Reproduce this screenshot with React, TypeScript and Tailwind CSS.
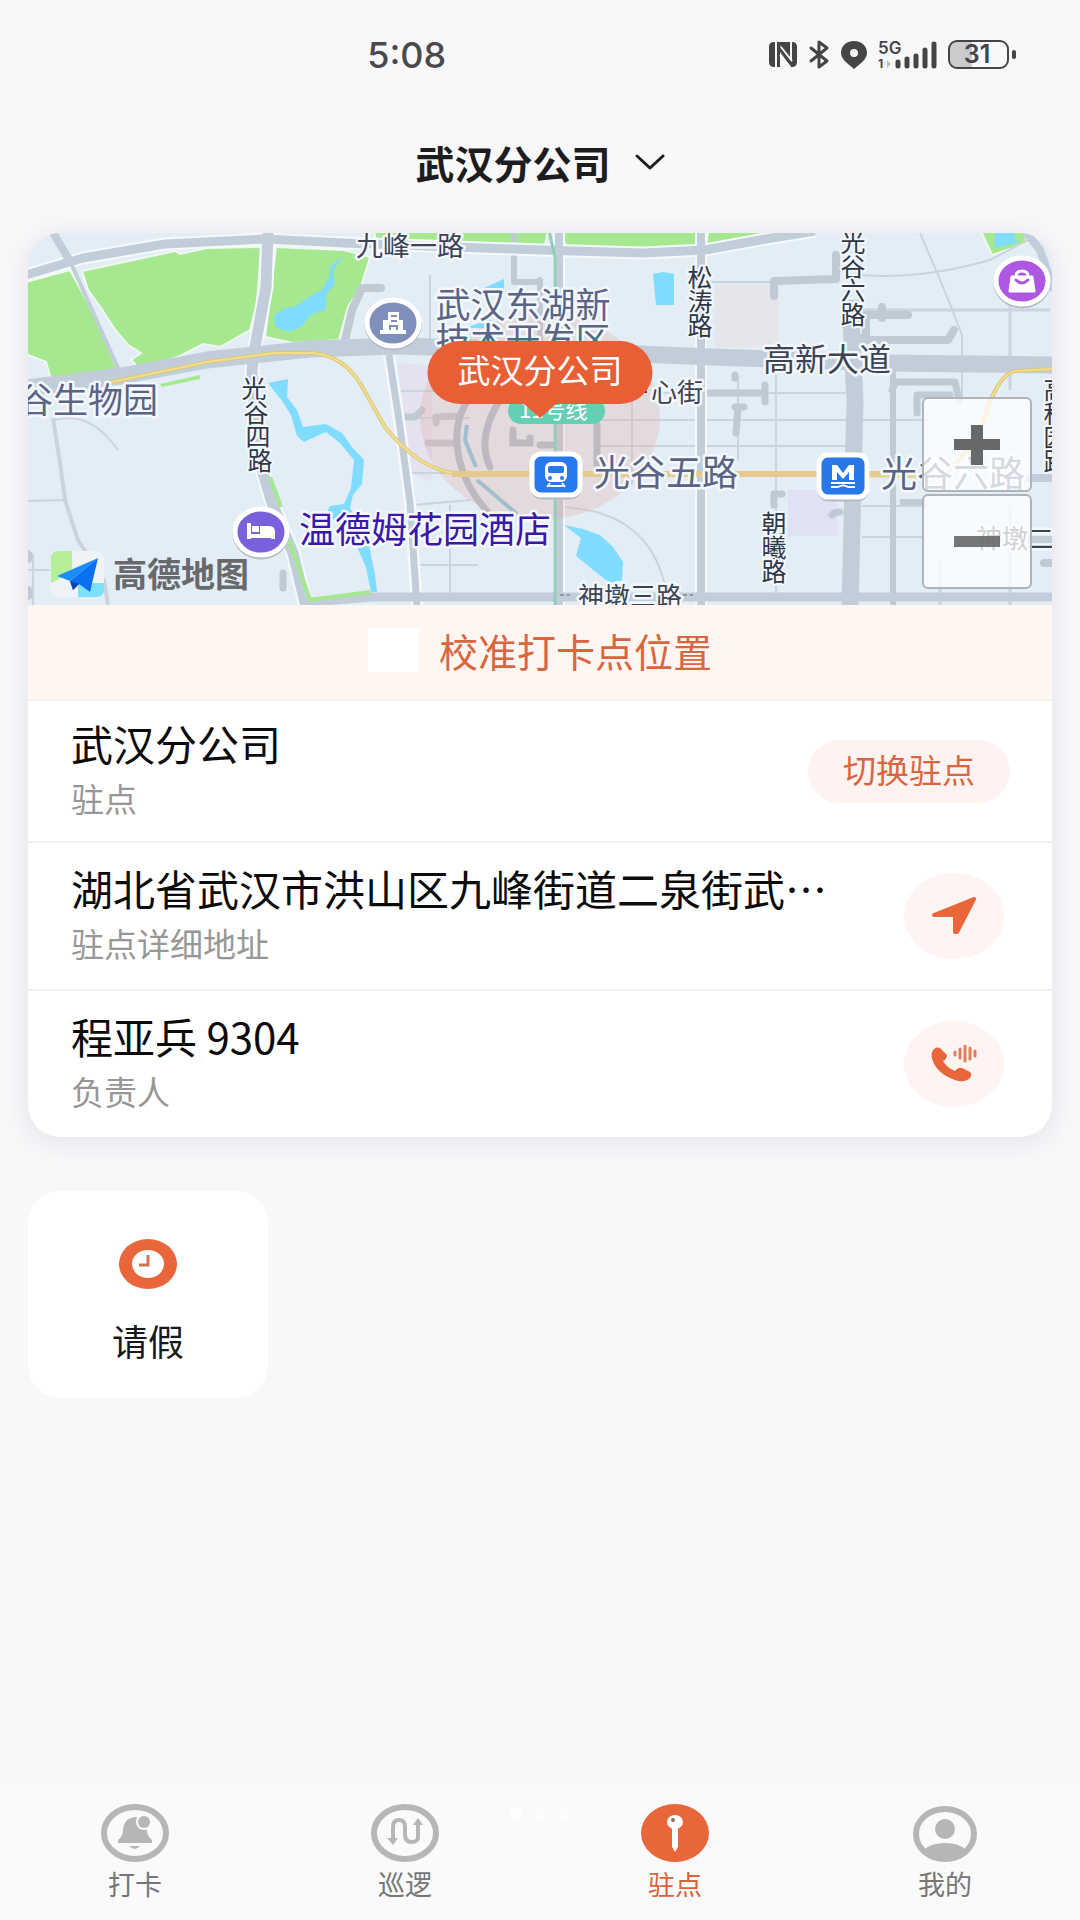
import React, { useState } from 'react';

interface RowProps {
  title: string;
  label: string;
  className: string;
  children: React.ReactNode;
}

const PlaceLabel = ({ x, y, size = 26, fill = '#3c4456', anchor = 'start', text }: {
  x: number; y: number; size?: number; fill?: string; anchor?: 'start' | 'middle' | 'end'; text: string;
}) => (
  <text x={x} y={y} fontSize={size} fill={fill} textAnchor={anchor} stroke="#f4f8fc" strokeWidth={5} strokeLinejoin="round" paintOrder="stroke">{text}</text>
);

// Street names that run down the road, one character per line
const StreetLabel = ({ chars, x, y, step = 24, drift = 0 }: { chars: string; x: number; y: number; step?: number; drift?: number }) => (
  <g fontSize={25} fill="#2f3747" textAnchor="middle" stroke="#f4f8fc" strokeWidth={4} strokeLinejoin="round" paintOrder="stroke">
    {chars.split('').map((c, i) => (
      <text key={i} x={x + i * drift} y={y + i * step}>{c}</text>
    ))}
  </g>
);

const CityMap = () => (
  <svg viewBox="28 233 1024 372" className="block w-full" role="img" aria-label="地图">
    <rect x="28" y="233" width="1024" height="372" fill="#e2edf6" />

    {/* districts */}
    <path d="M715 285h64v60l-64 3z" fill="#e5e5ea" />
    <path d="M788 490h50v46h-50z" fill="#e0e2f4" />
    <path d="M392 362l40 4v115l-28-10z" fill="#e4e2f1" />

    {/* parks */}
    <g fill="#a5e88f" stroke="#f0f8f2" strokeWidth="2">
      <path d="M26 282L70 270L92 310L119 373L52 383L46 362L26 354z" />
      <path d="M82 271L152 256L175 251L180 254L207 248L261 247L257 303L250 330L236 338L220 347L203 344L180 356L165 361L138 367L131 360L141 353L128 345L116 331L101 308L88 290z" />
      <path d="M276 247L344 250L370 257L361 287L348 307L339 340L293 343L265 337L271 290z" />
      <path d="M374 231H548L545 245L460 244L376 241z" />
      <path d="M561 231H700V246L640 250L566 247z" />
      <path d="M708 231H790L706 248z" />
      <path d="M981 231H1023L1028 243L992 255z" />
    </g>
    <path d="M160 384l40-9v4l-38 8z" fill="#a5e88f" />

    {/* water */}
    <g fill="#7fdcff">
      <path d="M344 255L333 270L335 284L327 293L325 310L312 314L301 327L288 332L275 327L274 316L283 309L296 306L312 295L322 290L329 277L330 267z" />
      <path d="M268 383L288 379L287 397L297 410L303 427L326 424L342 433L352 447L364 460L362 484L353 495L350 508L356 519L369 545L375 575L377 592L371 592L366 567L356 545L338 525L327 512L330 506L344 504L351 488L354 460L340 443L326 432L304 442L297 436L291 415L282 401z" />
      <path d="M653 274l10-2 11 2v31h-18z" />
      <path d="M564 525L583 529L600 535L613 547L623 562L622 580L611 584L597 573L576 556L581 538z" />
      <path d="M484 288l20-9v13z" />
      <path d="M995 233h18l5 10-24 5z" />
      <path d="M465 328l26-9 4 9z" />
    </g>
    <path d="M467 425l-2 15 11 27M477 480l40 34" fill="none" stroke="#85c6dd" strokeWidth="4" />

    {/* minor streets */}
    <g fill="none" stroke="#cbd4de" strokeWidth="2">
      <path d="M53 418L61 470L65 500L78 540L104 580L108 605" strokeWidth="4" />
      <path d="M28 501L65 500M28 570H50M55 420Q90 410 118 450" />
      <path d="M394 391H450M400 418H470M410 473H460M413 505L470 500M420 565H478M450 505V595" />
      <path d="M560 507Q650 510 666 590M660 393H850M600 420H850M600 446H850" />
      <path d="M700 282H775M776 375V600M738 375V460M632 395V485M598 400V470" />
      <path d="M860 420H930M862 506H930M862 537H925M860 275Q920 280 990 260L1028 240M920 233Q945 290 962 335V400" />
      <path d="M862 310H1050M1010 260V390M1010 505V605M940 560V605" strokeWidth="3" />
      <path d="M430 275V345M28 550L33 555V605" />
    </g>

    {/* side roads */}
    <g fill="none" stroke="#bfcad5" strokeWidth="8" strokeLinecap="round" strokeLinejoin="round">
      <path d="M344 345L352 310L362 288H381" />
      <path d="M402 417H415L422 410M436 423V417L458 416M428 443H455" strokeWidth="7" />
      <path d="M774 296V281L836 279V255" />
      <path d="M735 375V378M705 393H760M765 385V402M735 407H744M738 407L736 433" strokeWidth="7" />
      <path d="M860 338L868 340H948L954 330M866 335V315H908M882 307V318" />
      <path d="M892 390L896 382H955L959 400M917 413V395H950" strokeWidth="7" />
      <path d="M774 505V494H782M832 515Q834 512 840 512M283 573v15" strokeWidth="7" />
      <path d="M893 370V605M900 502H925" strokeWidth="6" strokeLinecap="butt" />
      <path d="M514 231V282H540M540 280V345" strokeWidth="6" />
      <path d="M1044 563h8M28 555v4M28 590v6" />
    </g>

    {/* main roads */}
    <g fill="none" stroke="#f5f9fc" strokeLinejoin="round">
      <path d="M26 275L83 258L165 244L265 239L344 243L540 250L643 253L705 250L760 240L815 231" strokeWidth="13" />
      <path d="M268 231L266 287L255 347L252 370L257 453L272 503L293 553L306 607" strokeWidth="15" />
      <path d="M389 355L399 420L410 503L417 607M701 231V605M852 300V607M559 231V605" strokeWidth="12" />
    </g>
    <g fill="none" stroke="#c1ced9" strokeLinejoin="round">
      <path d="M26 275L83 258L165 244L265 239L344 243L540 250L643 253L705 250L760 240L815 231" strokeWidth="9" />
      <path d="M52 231L71 263" strokeWidth="8" />
      <path d="M71 263L122 377" strokeWidth="4" />
      <path d="M268 231L266 287L255 347L252 370L257 453L272 503L293 553L306 607" strokeWidth="11" />
      <path d="M389 355L399 420L410 503L417 607" strokeWidth="7" />
      <path d="M300 603L372 597H1054" strokeWidth="9" />
      <path d="M559 231V605M701 231V605" strokeWidth="8" />
      <path d="M850 300L855 400L850 607" strokeWidth="17" />
      <path d="M1025 231L1040 250L1054 290M1014 478h40M1026 540h28" strokeWidth="8" />
      <path d="M26 388L121 376L207 360L310 349L396 346L540 350L712 357L884 363L1054 365" strokeWidth="17" />
    </g>
    <path d="M270 477L281 507M289 540L310 600L370 592" fill="none" stroke="#a5e88f" strokeWidth="4" />

    {/* service area around the station */}
    <ellipse cx="540" cy="417" rx="120" ry="103" fill="#e5a9a2" opacity=".28" />
    <g fill="none" stroke="#beb9c0" strokeWidth="7" strokeLinecap="round">
      <path d="M466 403C450 430 454 475 488 512M498 403C482 430 482 450 490 467M513 430V443H530V438M597 425V465M540 445H552" />
    </g>

    {/* metro lines */}
    <path d="M107 383L207 362L275 353H312Q342 355 360 383L385 427Q420 470 455 473H700L940 476Q965 462 984 420Q997 375 1015 371L1054 369" fill="none" stroke="#d9c87e" strokeWidth="4" />
    <path d="M107 383L207 362L275 353H312Q342 355 360 383L385 427Q420 470 455 473H700L940 476Q965 462 984 420Q997 375 1015 371L1054 369" fill="none" stroke="#f3dc8c" strokeWidth="2" />
    <path d="M452 474H880" fill="none" stroke="#e5c98d" strokeWidth="6" />
    <path d="M549 231L555 257V605" fill="none" stroke="#8fceb9" strokeWidth="3" />

    <PlaceLabel x={356} y={256} size={27} text="九峰一路" />
    <PlaceLabel x={523} y={318} size={35} fill="#5a6484" anchor="middle" text="武汉东湖新" />
    <PlaceLabel x={523} y={353} size={35} fill="#5a6484" anchor="middle" text="技术开发区" />
    <PlaceLabel x={158} y={413} size={35} fill="#5a6484" anchor="end" text="光谷生物园" />
    <PlaceLabel x={891} y={371} size={32} anchor="end" text="高新大道" />
    <PlaceLabel x={703} y={402} size={26} anchor="end" text="心街" />
    <path d="M640 392h7" stroke="#3c4456" strokeWidth="2" />
    <PlaceLabel x={594} y={486} size={36} fill="#5a6484" text="光谷五路" />
    <PlaceLabel x={881} y={487} size={36} fill="#5a6484" text="光谷六路" />
    <PlaceLabel x={299} y={543} size={36} fill="#3a19a8" text="温德姆花园酒店" />
    <path d="M560 595h10M683 595h10" stroke="#8d97a4" strokeWidth="2" strokeDasharray="4 3" />
    <PlaceLabel x={578} y={606} size={26} text="神墩三路" />
    <PlaceLabel x={976} y={548} size={26} text="神墩二路" />
    <StreetLabel chars="光谷四路" x={254} y={398} drift={2} />
    <StreetLabel chars="松涛路" x={700} y={287} />
    <StreetLabel chars="光谷六路" x={853} y={252} />
    <StreetLabel chars="朝曦路" x={774} y={533} />
    <StreetLabel chars="高科园路" x={1056} y={399} />

    {/* points of interest */}
    <g stroke="#fff" strokeWidth="5">
      <ellipse cx="393" cy="325" rx="28" ry="25" fill="#a9b3c4" stroke="#b5bfca" strokeWidth="1" />
      <ellipse cx="393" cy="323" rx="26" ry="23" fill="#7f8ebb" />
      <ellipse cx="261" cy="534" rx="28" ry="25" fill="#a9b3c4" stroke="#b5bfca" strokeWidth="1" />
      <ellipse cx="261" cy="532" rx="26" ry="23" fill="#7a60dc" />
      <ellipse cx="1022" cy="283" rx="28" ry="25" fill="#a9b3c4" stroke="#b5bfca" strokeWidth="1" />
      <ellipse cx="1022" cy="281" rx="26" ry="23" fill="#ad57e2" />
      <rect x="531" y="455" width="50" height="44" rx="10" fill="#a9b3c4" stroke="#b5bfca" strokeWidth="1" />
      <rect x="532" y="454" width="48" height="41" rx="9" fill="#2878f0" />
      <rect x="818" y="456" width="50" height="45" rx="10" fill="#a9b3c4" stroke="#b5bfca" strokeWidth="1" />
      <rect x="819" y="455" width="48" height="42" rx="9" fill="#2878e8" />
    </g>
    <g fill="#fff">
      <path d="M388 312h11v8h4v10h3v4h-26v-4h3v-10h5z" />
      <path d="M391 316h6M391 321h6M390 330v-4h7v4" fill="none" stroke="#7f8ebb" strokeWidth="2" />
      <path d="M247 523h4v11h16v-8h2q6 0 6 6v7h-4v-1h-20v1h-4z" />
      <path d="M252 526h7v6h-7zM260 526h8v8h-8z" />
      <path d="M1012 277h20l2 14h-24z" stroke="#fff" strokeWidth="3" strokeLinejoin="round" />
      <path d="M1016 277v-1q0-5 6-5t6 5v1" fill="none" stroke="#fff" strokeWidth="3" />
      <path d="M1016 280q6 6 12 0" fill="none" stroke="#ad57e2" strokeWidth="3" strokeLinecap="round" />
      <rect x="545" y="462" width="22" height="20" rx="6" />
      <path d="M547 487l3-4M565 487l-3-4M549 486h14" stroke="#fff" strokeWidth="2" />
      <rect x="548" y="466" width="16" height="7" rx="2" fill="#2878f0" />
      <circle cx="550" cy="478" r="2" fill="#2878f0" />
      <circle cx="562" cy="478" r="2" fill="#2878f0" />
      <path d="M832 480V465h5l6 8 6-8h5v15h-5v-8l-6 7-6-7v8z" />
      <path d="M831 483h24M831 487h7q5-3 10 0h7" fill="none" stroke="#fff" strokeWidth="2" />
    </g>

    <rect x="508" y="398" width="97" height="26" rx="13" fill="#63cfb4" />
    <text x="519" y="418" fontSize="22" fill="#fff">11号线</text>
    <path d="M460 341H620A32 31 0 0 1 620 404H556L540 418L524 404H460A32 31 0 0 1 460 341z" fill="#e95f35" />
    <text x="540" y="383" fontSize="33" fill="#fff" textAnchor="middle">武汉分公司</text>

    {/* map provider */}
    <rect x="51" y="551" width="53" height="46" rx="8" fill="#eef4f6" />
    <path d="M59 551h13v22l-21 10v-24q0-8 8-8z" fill="#b5ef9a" />
    <path d="M78 597v-14h26v6q0 8-8 8z" fill="#7de0fb" />
    <path d="M98 558L57 576l13 5z" fill="#1b8dfa" />
    <path d="M98 558L70 581l3 9 6-6 11 8z" fill="#0a6ff0" />
    <path d="M70 581l3 9 6-6z" fill="#1443a8" />
    <text x="113" y="587" fontSize="34" fontWeight="700" fill="#67696d">高德地图</text>
  </svg>
);

const StatusIcons = () => (
  <svg viewBox="768 38 250 34" className="h-[34px] w-[250px] text-[#454547]" fill="currentColor" aria-hidden="true">
    <path d="M774 42h1v25h-1q-5 0-5-5V47q0-5 5-5z" />
    <path d="M777 42l15 20v-20q5 0 5 5v15q0 5-5 5h-1l-11-15v15h-3z" />
    <path d="M777 42h13v17l-10-14v22h-3z" />
    <path d="M781 47l11 14M780 55l10 12M791 42v18" stroke="#f8f8fb" strokeWidth="2" fill="none" />
    <path d="M811 48l16 13-8 6V42l8 6-16 13" fill="none" stroke="currentColor" strokeWidth="3" strokeLinejoin="round" strokeLinecap="round" />
    <path fillRule="evenodd" d="M854 41c8 0 13 5 13 12 0 6-7 11-13 16-6-5-13-10-13-16 0-7 5-12 13-12zm0 8a4 4 0 1 0 0 8 4 4 0 0 0 0-8z" />
    <text x="878" y="54" fontSize="17" fontWeight="600" fontFamily="Inter, sans-serif">5G</text>
    <text x="878" y="68" fontSize="12" fontWeight="700" fontFamily="Inter, sans-serif">1</text>
    <path d="M887 60l4 4-4 4z" opacity=".3" />
    <g stroke="currentColor" strokeWidth="5" strokeLinecap="round">
      <path d="M898 62v4M907 59v7M916 56v10M925 50v16M934 44v22" />
    </g>
    <path d="M957 42h15v25h-15q-7 0-7-7V49q0-7 7-7z" opacity=".25" />
    <rect x="949" y="41" width="59" height="27" rx="8" fill="none" stroke="currentColor" strokeWidth="2" />
    <rect x="1012" y="50" width="4" height="9" rx="2" />
    <text x="977" y="63" fontSize="25" fontWeight="600" textAnchor="middle" fontFamily="Inter, sans-serif">31</text>
  </svg>
);

const InfoRow: React.FC<RowProps> = ({ title, label, className, children }) => (
  <div className={`flex items-center justify-between border-t-2 border-[#f2f1f3] pl-[43px] ${className}`}>
    <div className="min-w-0">
      <h2 className="truncate pb-1 text-[42px] leading-[50px] text-[#0b0b0c]">{title}</h2>
      <p className="text-[33px] leading-[52px] text-[#979797]">{label}</p>
    </div>
    {children}
  </div>
);

const ring = <ellipse cx="34" cy="29" rx="31" ry="26" fill="none" stroke="#b6b6b6" strokeWidth="6" />;

const tabs = [
  {
    name: '打卡',
    icon: (
      <>
        {ring}
        <path d="M17 36q5-4 5-10 1-12 12-13 11 1 12 13 0 6 5 10v3H17z" fill="#b6b6b6" />
        <circle cx="43" cy="18" r="8" fill="#fafafa" />
        <circle cx="43" cy="18" r="6" fill="#b6b6b6" />
        <path d="M28 42h11q-5 6-11 0z" fill="#b6b6b6" />
      </>
    ),
  },
  {
    name: '巡逻',
    icon: (
      <>
        {ring}
        <path d="M22 36V23q0-7 6-7t6 7v8q0 7 7 7t6-7V20" fill="none" stroke="#b6b6b6" strokeWidth="4" />
        <path d="M16 34h11l-5 7zM42 21h10l-5-7z" fill="#b6b6b6" />
      </>
    ),
  },
  {
    name: '驻点',
    icon: (
      <>
        <ellipse cx="34" cy="29" rx="34" ry="29" fill="#e9653a" />
        <ellipse cx="34" cy="18" rx="8" ry="7" fill="#fff" />
        <path d="M31 23h6v20l-3 5-3-5z" fill="#fff" />
        <circle cx="32" cy="16" r="2" fill="#9a6a58" />
      </>
    ),
  },
  {
    name: '我的',
    icon: (
      <>
        <ellipse cx="34" cy="30" rx="29" ry="25" fill="none" stroke="#b6b6b6" strokeWidth="6" />
        <ellipse cx="34" cy="25" rx="10" ry="10" fill="#b6b6b6" />
        <path d="M13 46Q20 39 34 39t21 7q-8 11-21 11T13 46z" fill="#b6b6b6" />
      </>
    ),
  },
];

export default function App() {
  const [activeTab, setActiveTab] = useState('驻点');

  return (
    <div className="flex min-h-screen flex-col bg-[#f8f8fb] font-['Noto_Sans_CJK_SC',sans-serif]">
      <div className="flex h-[110px] items-center justify-between pl-[34%] pr-[62px]">
        <span className="font-[Inter,sans-serif] text-4xl font-medium text-[#4a4a4c]">5:08</span>
        <StatusIcons />
      </div>

      <header className="flex h-[104px] items-center justify-center">
        <button className="flex items-center gap-6 text-[39px] font-bold text-[#1d1d1f]">
          武汉分公司
          <svg viewBox="0 0 30 16" className="h-4 w-[30px]" fill="none" stroke="currentColor" strokeWidth="3" strokeLinecap="round" strokeLinejoin="round" aria-hidden="true">
            <path d="M2 2l13 12L28 2" />
          </svg>
        </button>
      </header>

      <main className="px-7 pt-[19px]">
        <section className="overflow-hidden rounded-[32px] bg-white shadow-[0_4px_28px_rgba(40,40,60,0.10)]">
          <div className="relative">
            <CityMap />
            <div className="absolute bottom-4 right-5 flex w-[110px] flex-col gap-[2px]">
              <button aria-label="放大" className="flex h-[95px] items-center justify-center rounded-md border-2 border-[#aeb4ba] bg-white/75">
                <svg viewBox="0 0 46 40" className="h-10 w-[46px]" fill="#666869"><path d="M17 0h12v14h17v11H29v15H17V25H0V14h17z" /></svg>
              </button>
              <button aria-label="缩小" className="flex h-[95px] items-center justify-center rounded-md border-2 border-[#aeb4ba] bg-white/75">
                <svg viewBox="0 0 46 40" className="h-10 w-[46px]" fill="#666869" opacity=".9"><path d="M0 14h46v11H0z" /></svg>
              </button>
            </div>
          </div>

          <button className="flex h-[94px] w-full items-center justify-center gap-5 bg-[#fff5f1] pb-1 text-[39px] text-[#d9663f]">
            <span className="h-11 w-[51px] bg-white" />
            校准打卡点位置
          </button>

          <InfoRow title="武汉分公司" label="驻点" className="py-[17px] pr-[42px]">
            <button className="h-[63px] shrink-0 rounded-full bg-[#fff3f1] px-[35px] pb-1 text-[33px] leading-[58px] text-[#d9663f]">切换驻点</button>
          </InfoRow>
          <InfoRow title="湖北省武汉市洪山区九峰街道二泉街武…" label="驻点详细地址" className="py-5 pr-12">
            <button aria-label="导航" className="flex h-[86px] w-[100px] shrink-0 items-center justify-center rounded-[50%] bg-[#fff4f2]">
              <svg viewBox="0 0 44 38" className="h-[38px] w-11" fill="#e9653a" stroke="#e9653a" strokeWidth="4" strokeLinejoin="round">
                <path d="M2 18L42 2 25 35H23V18z" />
              </svg>
            </button>
          </InfoRow>
          <InfoRow title="程亚兵 9304" label="负责人" className="py-5 pr-12">
            <button aria-label="拨打电话" className="flex h-[86px] w-[100px] shrink-0 items-center justify-center rounded-[50%] bg-[#fff4f2]">
              <svg viewBox="0 0 46 38" className="h-[38px] w-[46px]" fill="#e9653a">
                <path d="M1 7Q4 1 9 3L16 10Q16 14 12 16Q16 23 24 26Q27 22 31 23L39 27Q42 30 38 34Q32 38 24 35Q6 29 1 14Q0 10 1 7z" />
                <path d="M24 7v3M29 4v9M34 1v15M39 3v11M44 6v5" stroke="#dd7f60" strokeWidth="3" strokeLinecap="round" />
              </svg>
            </button>
          </InfoRow>
        </section>

        <a href="#leave" className="mt-[54px] flex h-[207px] w-60 flex-col items-center rounded-[32px] bg-white pt-12">
          <svg viewBox="0 0 58 50" className="h-[50px] w-[58px]" aria-hidden="true">
            <ellipse cx="29" cy="25" rx="29" ry="25" fill="#e9653a" />
            <ellipse cx="29" cy="25" rx="16" ry="14" fill="#fff" />
            <path d="M29 16v10h-9" fill="none" stroke="#cf7454" strokeWidth="3" />
          </svg>
          <span className="mt-[26px] text-4xl leading-[50px] text-[#19191a]">请假</span>
        </a>
      </main>

      <nav className="relative mt-auto grid grid-cols-4 bg-[#fafafa] pb-[14px] pt-5">
        <div className="absolute left-1/2 top-6 flex -translate-x-1/2 gap-3" aria-hidden="true">
          <i className="size-3 rounded-full bg-white" />
          <i className="size-3 rounded-full bg-white/60" />
          <i className="size-3 rounded-full bg-white/60" />
        </div>
        {tabs.map(tab => (
          <button key={tab.name} onClick={() => setActiveTab(tab.name)} className="flex flex-col items-center">
            <svg viewBox="0 0 68 58" className="h-[58px] w-[68px]" aria-hidden="true">{tab.icon}</svg>
            <span className={`text-[27px] leading-[44px] ${activeTab === tab.name ? 'text-[#d9623a]' : 'text-[#767676]'}`}>{tab.name}</span>
          </button>
        ))}
      </nav>
    </div>
  );
}
